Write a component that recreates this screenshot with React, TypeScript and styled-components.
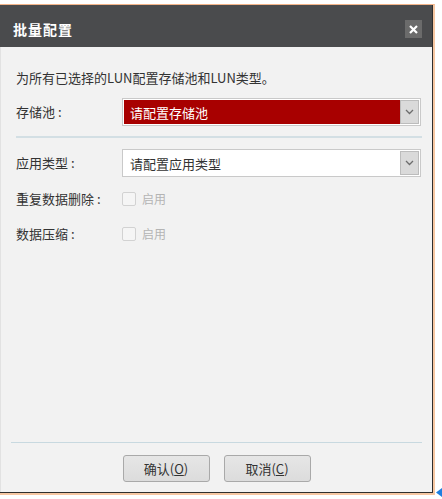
import React from "react";
import styled, { createGlobalStyle } from "styled-components";

const GlobalStyle = createGlobalStyle`
  html, body {
    margin: 0;
    padding: 0;
    background: #ffffff;
  }
  body {
    font-family: "Noto Sans CJK SC", "Noto Sans", "Liberation Sans", sans-serif;
    font-size: 13px;
    color: #333333;
  }
  * { box-sizing: border-box; }
`;

const Page = styled.div`
  position: relative;
  width: 442px;
  height: 499px;
  padding-top: 4px;
  overflow: hidden;
`;

const Frame = styled.div`
  width: 435px;
  border-top: 1px solid #f3b489;
  border-right: 2px solid #f6c7a2;
  border-bottom: 2px solid #f6c7a2;
`;

const Dialog = styled.div`
  width: 433px;
  height: 488px;
  display: flex;
  flex-direction: column;
  border-right: 1px solid #2e2e2e;
  border-bottom: 1px solid #2e2e2e;
  background: #f2f2f2;
`;

const Header = styled.div`
  height: 42px;
  flex: none;
  display: flex;
  align-items: center;
  justify-content: space-between;
  padding: 6px 10px 0 13px;
  background: #4a4b4d;
`;

const Title = styled.div`
  color: #ffffff;
  font-weight: 700;
  font-size: 14px;
  letter-spacing: 1px;
  line-height: 18px;
`;

const CloseButton = styled.div`
  width: 17px;
  height: 18px;
  background: #6b6b6b;
  display: flex;
  align-items: center;
  justify-content: center;
`;

const Body = styled.div`
  flex: 1;
  display: flex;
  flex-direction: column;
  border-left: 1px solid #e2e2e2;
  padding: 22px 10px 0 15px;
`;

const Intro = styled.div`
  line-height: 18px;
  font-size: 13px;
  color: #333;
  white-space: nowrap;
`;

const Row = styled.div<{ $mt: number }>`
  display: flex;
  align-items: center;
  height: 28px;
  margin-top: ${(p) => p.$mt}px;
`;

const Label = styled.div`
  width: 106px;
  flex: none;
  font-size: 13px;
  line-height: 18px;
  color: #333;
  white-space: nowrap;
`;

const Select = styled.div`
  width: 299px;
  height: 28px;
  display: flex;
  border: 1px solid #c9c9c9;
  padding: 1px;
  background: #ffffff;
`;

const SelectValue = styled.div<{ $error?: boolean }>`
  flex: 1;
  display: flex;
  align-items: center;
  padding-left: 6px;
  font-size: 13px;
  background: ${(p) => (p.$error ? "#a80000" : "#ffffff")};
  color: ${(p) => (p.$error ? "#ffffff" : "#333333")};
`;

const SelectArrow = styled.div`
  width: 19px;
  flex: none;
  display: flex;
  align-items: center;
  justify-content: center;
  background: #dadada;
  border: 1px solid #bcbcbc;
`;

const Divider = styled.div`
  height: 2px;
  margin-top: 10px;
  background: #d3dfe4;
`;

const CheckWrap = styled.div`
  display: flex;
  align-items: center;
  gap: 6px;
`;

const CheckBox = styled.div`
  width: 14px;
  height: 14px;
  border: 1px solid #d2d2d2;
  border-radius: 2px;
  background: #f5f5f5;
`;

const CheckText = styled.span`
  font-size: 12px;
  color: #b4b4b4;
  line-height: 16px;
`;

const Footer = styled.div`
  margin-top: auto;
  margin-left: -5px;
  border-top: 1px solid #c8d9e0;
  padding: 12px 0 10px;
  display: flex;
  justify-content: center;
  gap: 14px;
`;

const Button = styled.button`
  width: 87px;
  height: 27px;
  border: 1px solid #a9a9a9;
  border-radius: 3px;
  background: linear-gradient(#e6e6e6, #dcdcdc);
  font-family: inherit;
  font-size: 13px;
  color: #333;
  padding: 0;
  display: flex;
  align-items: center;
  justify-content: center;
  u { text-decoration: underline; }
`;

const ResizeHint = styled.svg`
  position: absolute;
  left: 436px;
  top: 488px;
`;

const Chevron = () => (
  <svg width="9" height="6" viewBox="0 0 9 6">
    <path d="M1 1 L4.5 4.5 L8 1" fill="none" stroke="#6d6d6d" strokeWidth="1.3" />
  </svg>
);

export default function App() {
  return (
    <>
      <GlobalStyle />
      <Page>
        <Frame>
          <Dialog>
            <Header>
              <Title>批量配置</Title>
              <CloseButton>
                <svg width="9" height="9" viewBox="0 0 9 9">
                  <path d="M1 1 L8 8 M8 1 L1 8" stroke="#ffffff" strokeWidth="2.2" />
                </svg>
              </CloseButton>
            </Header>
            <Body>
              <Intro>为所有已选择的LUN配置存储池和LUN类型。</Intro>
              <Row $mt={11}>
                <Label>存储池 :</Label>
                <Select>
                  <SelectValue $error>请配置存储池</SelectValue>
                  <SelectArrow>
                    <Chevron />
                  </SelectArrow>
                </Select>
              </Row>
              <Divider />
              <Row $mt={11}>
                <Label>应用类型 :</Label>
                <Select>
                  <SelectValue>请配置应用类型</SelectValue>
                  <SelectArrow>
                    <Chevron />
                  </SelectArrow>
                </Select>
              </Row>
              <Row $mt={8}>
                <Label>重复数据删除 :</Label>
                <CheckWrap>
                  <CheckBox />
                  <CheckText>启用</CheckText>
                </CheckWrap>
              </Row>
              <Row $mt={7}>
                <Label>数据压缩 :</Label>
                <CheckWrap>
                  <CheckBox />
                  <CheckText>启用</CheckText>
                </CheckWrap>
              </Row>
              <Footer>
                <Button>
                  确认(<u>O</u>)
                </Button>
                <Button>
                  取消(<u>C</u>)
                </Button>
              </Footer>
            </Body>
          </Dialog>
        </Frame>
        <ResizeHint width="6" height="9" viewBox="0 0 6 9">
          <path d="M6 0 L6 9 L0 4.5 Z" fill="#1e7fe0" />
        </ResizeHint>
      </Page>
    </>
  );
}
